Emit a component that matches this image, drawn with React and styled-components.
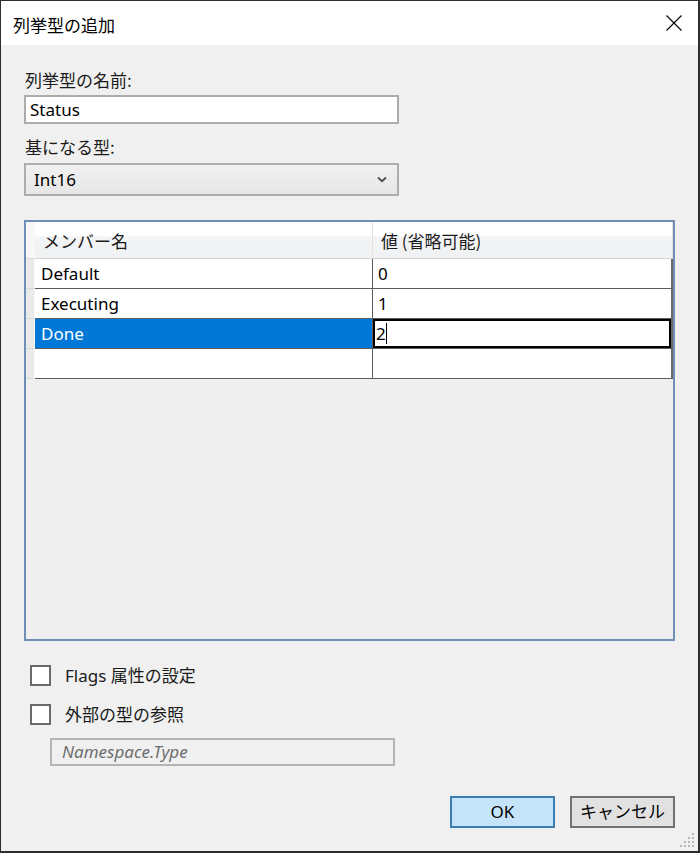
import styled, { createGlobalStyle } from "styled-components";

const GlobalStyle = createGlobalStyle`
  html, body {
    margin: 0;
    padding: 0;
    background: #ffffff;
  }
  body {
    font-family: "Noto Sans", "Noto Sans CJK JP", sans-serif;
    font-size: 17px;
    color: #000;
  }
`;

const Window = styled.div`
  position: relative;
  width: 700px;
  height: 853px;
  box-sizing: border-box;
  border-style: solid;
  border-color: #2d2d2d;
  border-width: 1px 2px 2px 1px;
  display: flex;
  flex-direction: column;
  background: #f0f0f0;
`;

const TitleBar = styled.div`
  height: 44px;
  flex: none;
  background: #ffffff;
  display: flex;
  align-items: center;
  justify-content: space-between;
  padding-left: 12px;
`;

const Title = styled.span`
  font-family: "Noto Sans CJK JP", sans-serif;
  font-size: 17px;
  line-height: 20px;
  margin-top: 3px;
  color: #000;
`;

const CloseButton = styled.div`
  width: 48px;
  height: 44px;
  display: flex;
  align-items: center;
  justify-content: center;
`;

const Body = styled.div`
  flex: 1;
  display: flex;
  flex-direction: column;
  padding: 25px 23px 0 23px;
`;

const Label = styled.div`
  font-family: "Noto Sans CJK JP", sans-serif;
  line-height: 20px;
  height: 20px;
  margin: ${(p) => p.$mt || 0}px 0 ${(p) => p.$mb || 0}px 1px;
  color: #1a1a1a;
`;

const TextBox = styled.div`
  box-sizing: border-box;
  width: 375px;
  height: 29px;
  border: 2px solid #acacac;
  background: #ffffff;
  display: flex;
  align-items: center;
  padding-left: 4px;
  line-height: 20px;
`;

const Combo = styled.div`
  box-sizing: border-box;
  width: 375px;
  height: 33px;
  border: 2px solid #adadad;
  background: linear-gradient(#f1f1f1, #e6e6e6);
  display: flex;
  align-items: center;
  justify-content: space-between;
  padding: 0 10px 0 8px;
  line-height: 20px;
`;

const GridFrame = styled.div`
  box-sizing: border-box;
  margin-top: 24px;
  width: 651px;
  height: 421px;
  border: 2px solid #6f8fb7;
  background: #efefef;
  display: flex;
  flex-direction: column;
`;

const Row = styled.div`
  display: flex;
  height: ${(p) => (p.$header ? 37 : 30)}px;
`;

const RowHead = styled.div`
  width: 9px;
  box-sizing: border-box;
  background: ${(p) => (p.$header ? "#f7f7f7" : "#eaeaea")};
  border-right: 1px solid #f8f8f8;
  border-bottom: 1px solid ${(p) => (p.$header ? "#dcdcdc" : "#d4d9de")};
`;

const HeaderCell = styled.div`
  box-sizing: border-box;
  width: ${(p) => p.$w}px;
  background: linear-gradient(#ffffff 0%, #ffffff 38%, #f3f4f6 42%, #f0f1f3 100%);
  border-right: 1px solid #e2e2e2;
  border-bottom: 1px solid #d5d5d5;
  display: flex;
  align-items: center;
  padding-left: ${(p) => p.$pl}px;
  font-family: "Noto Sans CJK JP", sans-serif;
  color: #1a1a1a;
`;

const Cell = styled.div`
  box-sizing: border-box;
  width: ${(p) => p.$w}px;
  background: ${(p) => (p.$selected ? "#0078d7" : "#ffffff")};
  color: ${(p) => (p.$selected ? "#ffffff" : "#000000")};
  border-bottom: 1px solid #5c5c5c;
  border-right: ${(p) => (p.$last ? "2px solid #6a6a6a" : "1px solid #5c5c5c")};
  display: flex;
  align-items: center;
  padding-left: ${(p) => p.$pl}px;
  line-height: 20px;
`;

const EditBox = styled.div`
  box-sizing: border-box;
  flex: 1;
  height: 100%;
  margin-left: -${(p) => p.$pl}px;
  border: 2px solid #000000;
  display: flex;
  align-items: center;
  padding-left: 1px;
`;

const Caret = styled.span`
  display: inline-block;
  width: 1px;
  height: 21px;
  background: #000;
  margin-left: 0px;
`;

const CheckRow = styled.div`
  display: flex;
  align-items: center;
  margin-top: ${(p) => p.$mt}px;
  padding-left: 6px;
  height: 21px;
`;

const CheckBox = styled.div`
  box-sizing: border-box;
  width: 21px;
  height: 21px;
  border: 2px solid #6a6a6a;
  background: #ffffff;
  margin-right: 14px;
`;

const CheckLabel = styled.span`
  line-height: 20px;
  color: #1a1a1a;
`;

const DisabledBox = styled.div`
  box-sizing: border-box;
  margin: 13px 0 0 26px;
  width: 345px;
  height: 28px;
  border: 2px solid #b4b4b4;
  background: #f0f0f0;
  display: flex;
  align-items: center;
  padding-left: 10px;
  font-style: italic;
  color: #6d6d6d;
  line-height: 20px;
`;

const ButtonRow = styled.div`
  display: flex;
  justify-content: flex-end;
  gap: 15px;
  margin-top: 30px;
`;

const Button = styled.div`
  box-sizing: border-box;
  width: 105px;
  height: 32px;
  border: 2px solid ${(p) => (p.$primary ? "#3a7db1" : "#717171")};
  background: ${(p) => (p.$primary ? "#c5e4fa" : "#e1e1e1")};
  display: flex;
  align-items: center;
  justify-content: center;
  font-family: "Noto Sans", "Noto Sans CJK JP", sans-serif;
  line-height: 20px;
  color: #000;
`;

const Grip = styled.svg`
  position: absolute;
  right: 2px;
  bottom: 2px;
`;

const CloseIcon = () => (
  <svg width="16" height="16" viewBox="0 0 16 16">
    <path d="M0.5 0.5 L15.5 15.5 M15.5 0.5 L0.5 15.5" stroke="#000" strokeWidth="1.1" fill="none" />
  </svg>
);

const Chevron = () => (
  <svg width="10" height="7" viewBox="0 0 10 7">
    <path d="M1 1.5 L5 5.2 L9 1.5" stroke="#4d4d4d" strokeWidth="1.8" fill="none" />
  </svg>
);

const SizeGrip = () => {
  const dots = [];
  for (let r = 0; r < 4; r++) {
    for (let c = 3 - r; c < 4; c++) {
      dots.push(<rect key={`${r}-${c}`} x={c * 4 + 1} y={r * 4 + 1} width="2" height="2" fill="#b9b9b9" />);
    }
  }
  return (
    <Grip width="17" height="17" viewBox="0 0 17 17">
      {dots}
    </Grip>
  );
};

const members = [
  { name: "Default", value: "0" },
  { name: "Executing", value: "1" },
  { name: "Done", value: "2", editing: true },
  { name: "", value: "" },
];

export default function App() {
  return (
    <>
      <GlobalStyle />
      <Window>
        <TitleBar>
          <Title>列挙型の追加</Title>
          <CloseButton>
            <CloseIcon />
          </CloseButton>
        </TitleBar>
        <Body>
          <Label $mb={5}>列挙型の名前:</Label>
          <TextBox>Status</TextBox>
          <Label $mt={13} $mb={6}>基になる型:</Label>
          <Combo>
            <span>Int16</span>
            <Chevron />
          </Combo>

          <GridFrame>
            <Row $header>
              <RowHead $header />
              <HeaderCell $w={338} $pl={8}>メンバー名</HeaderCell>
              <HeaderCell $w={300} $pl={8}>値 (省略可能)</HeaderCell>
            </Row>
            {members.map((m, i) => (
              <Row key={i}>
                <RowHead />
                <Cell $w={338} $pl={6} $selected={m.editing}>
                  {m.name}
                </Cell>
                <Cell $w={300} $pl={5} $last>
                  {m.editing ? (
                    <EditBox $pl={5}>
                      {m.value}
                      <Caret />
                    </EditBox>
                  ) : (
                    m.value
                  )}
                </Cell>
              </Row>
            ))}
          </GridFrame>

          <CheckRow $mt={24}>
            <CheckBox />
            <CheckLabel>Flags 属性の設定</CheckLabel>
          </CheckRow>
          <CheckRow $mt={18}>
            <CheckBox />
            <CheckLabel>外部の型の参照</CheckLabel>
          </CheckRow>
          <DisabledBox>Namespace.Type</DisabledBox>

          <ButtonRow>
            <Button $primary>OK</Button>
            <Button>キャンセル</Button>
          </ButtonRow>
        </Body>
        <SizeGrip />
      </Window>
    </>
  );
}
